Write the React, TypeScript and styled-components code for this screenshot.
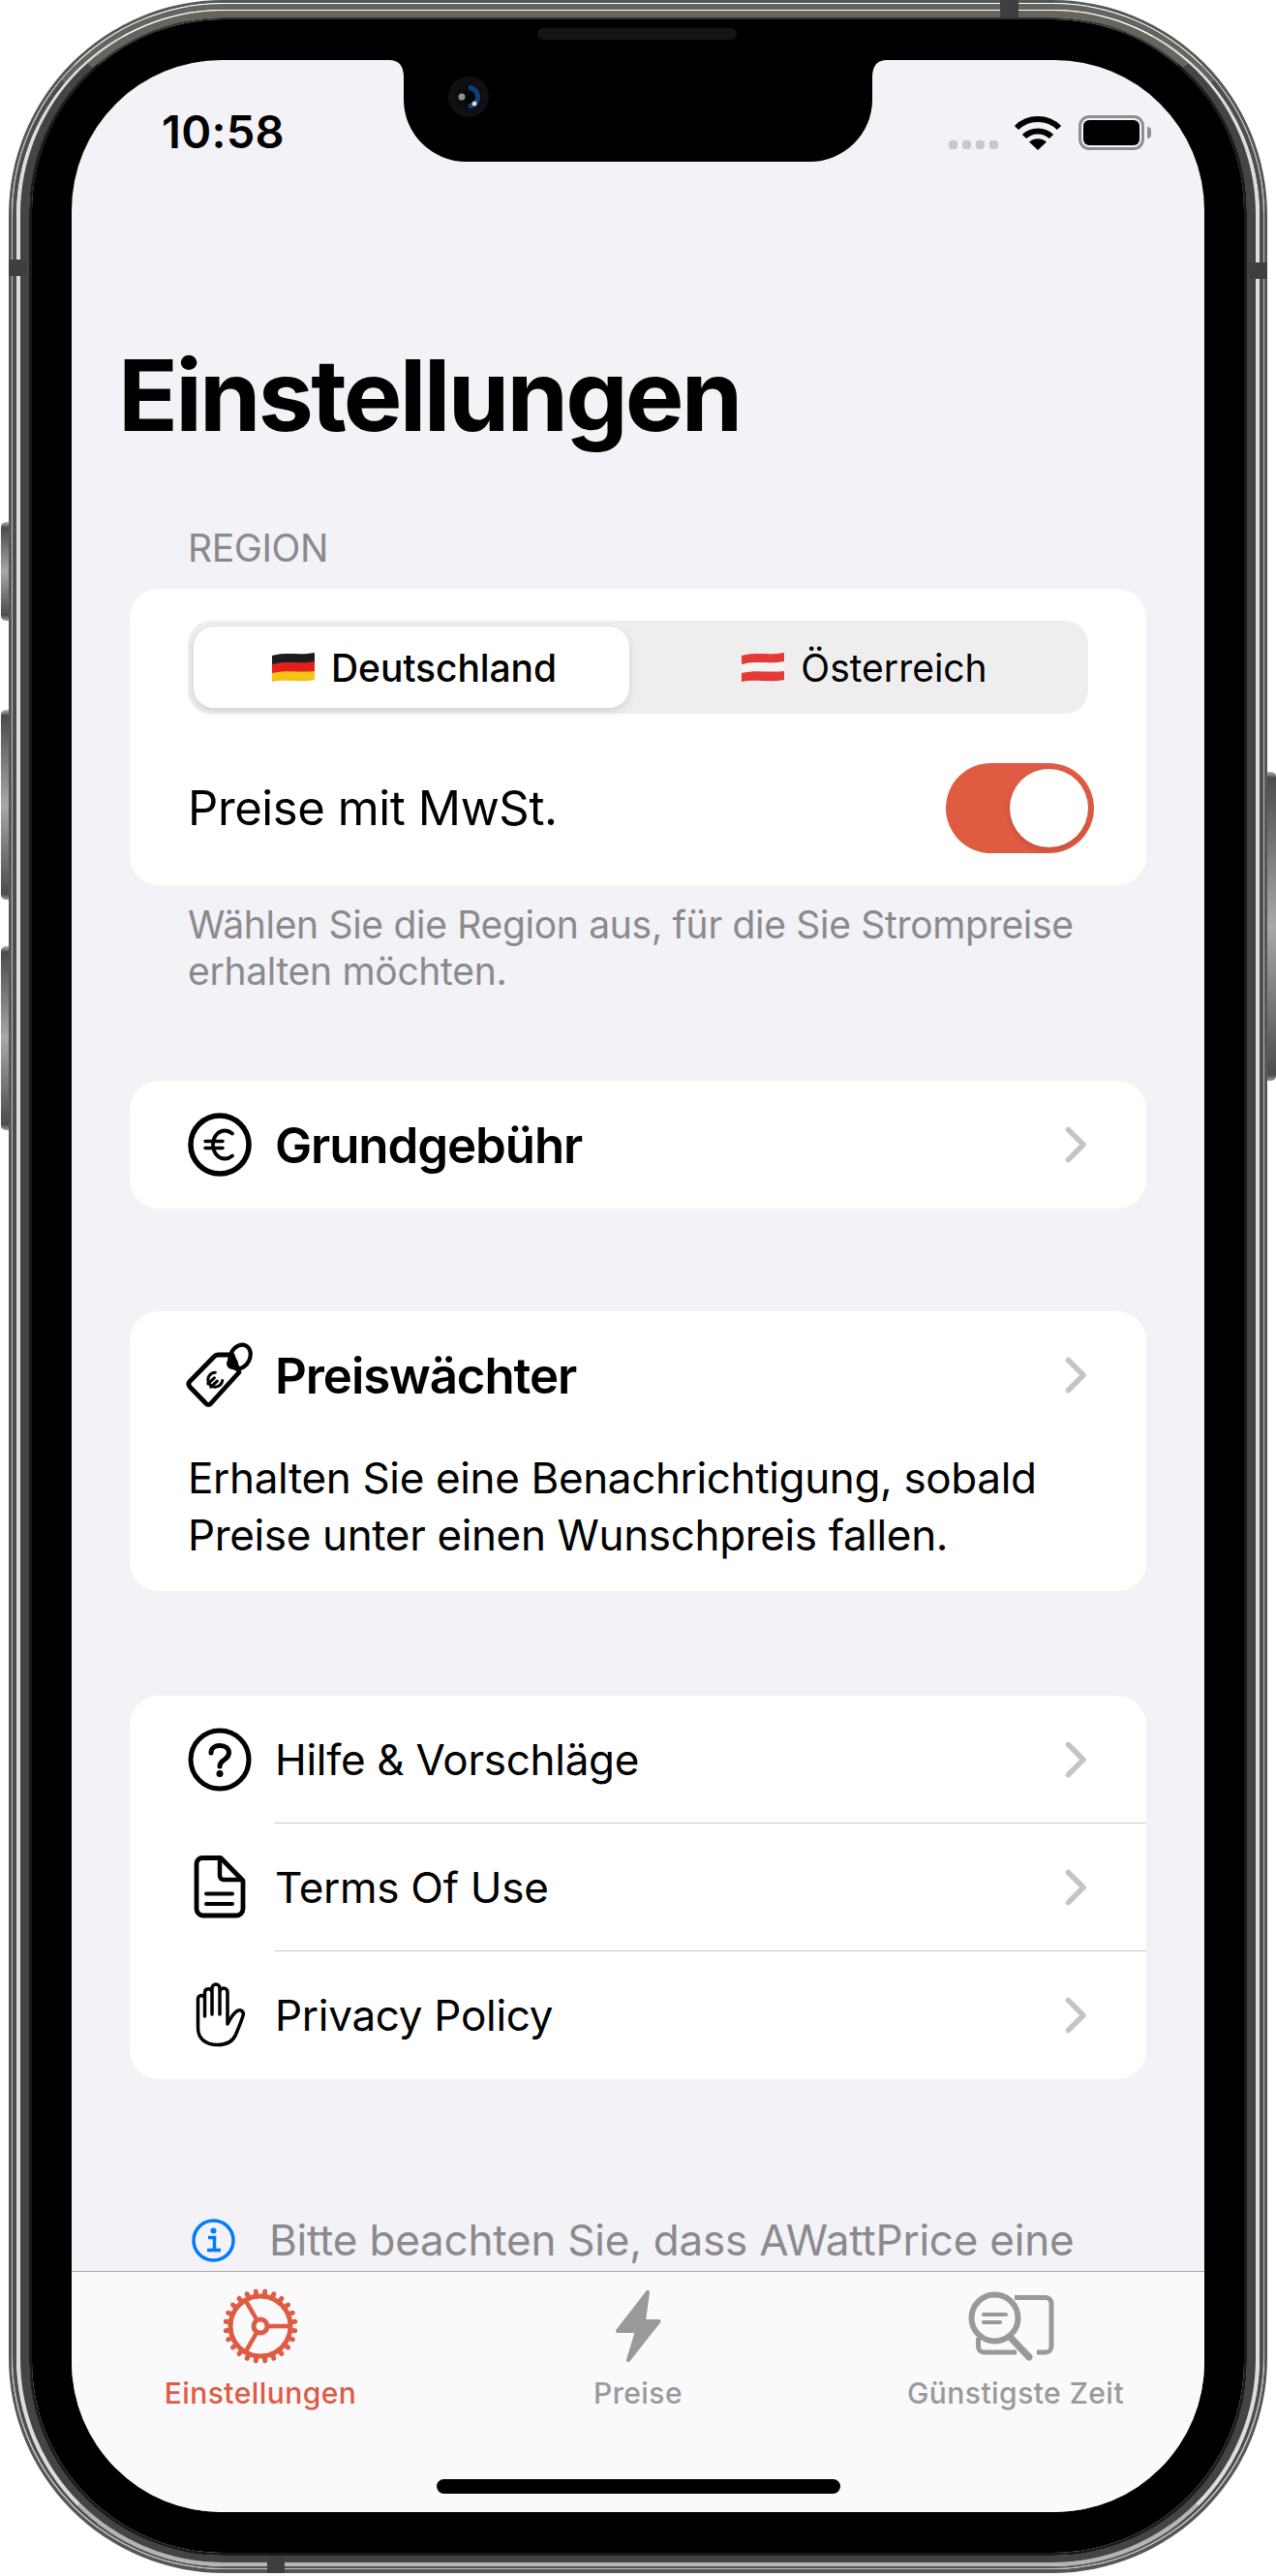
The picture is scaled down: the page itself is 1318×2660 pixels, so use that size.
import React from "react";
import styled, { createGlobalStyle } from "styled-components";

const RED = "#df5b42";
const TAB_GRAY = "#999999";
const LABEL_GRAY = "#8a8a8e";

const GlobalStyle = createGlobalStyle`
  html, body {
    margin: 0;
    padding: 0;
    background: #fff;
  }
  * {
    box-sizing: border-box;
  }
  body {
    font-family: Inter, "Liberation Sans", sans-serif;
    color: #000;
  }
`;

const Page = styled.div`
  width: 1318px;
  height: 2660px;
  padding-left: 9px;
  overflow: hidden;
`;

const Device = styled.div`
  position: relative;
  width: 1300px;
  height: 2657px;
`;

// One band of the steel frame, each side has its own width
const Ring = styled.div<{
  $r: number;
  $s: number;
  $t: number;
  $b: number;
  $c: string;
  $ct?: string;
  $cb?: string;
}>`
  display: flex;
  flex: 1;
  height: 100%;
  border-style: solid;
  border-width: ${($) => $.$t}px ${($) => $.$s}px ${($) => $.$b}px;
  border-color: ${($) => $.$ct ?? $.$c} ${($) => $.$c} ${($) => $.$cb ?? $.$c};
  border-radius: ${($) => $.$r}px;
`;

const Bezel = styled.div`
  position: relative;
  display: flex;
  flex: 1;
  padding: 42px 41px;
  background: #000;
  border-radius: 198px;
`;

const SideButton = styled.div<{ $top: number; $height: number; $right?: boolean }>`
  position: absolute;
  top: ${($) => $.$top}px;
  ${($) => ($.$right ? "right: -9px;" : "left: -8px;")}
  width: ${($) => ($.$right ? 9 : 8)}px;
  height: ${($) => $.$height}px;
  border-radius: ${($) => ($.$right ? "0 5px 5px 0" : "5px 0 0 5px")};
  background: linear-gradient(180deg, #b5b5b5 0, #4c4c4c 6px, #a8a8a8 50%, #4c4c4c calc(100% - 6px), #9a9a9a 100%);
`;

const Antenna = styled.div<{ $x: number; $y: number; $w: number; $h: number }>`
  position: absolute;
  left: ${($) => $.$x}px;
  top: ${($) => $.$y}px;
  width: ${($) => $.$w}px;
  height: ${($) => $.$h}px;
  background: #3f3f3f;
`;

const Speaker = styled.div`
  position: absolute;
  top: 9px;
  left: 522px;
  width: 206px;
  height: 12px;
  border-radius: 6px;
  background: #141414;
`;

const Screen = styled.div`
  position: relative;
  flex: 1;
  overflow: hidden;
  background: #f2f2f7;
  border-radius: 155px;
`;

const NotchShape = styled.svg`
  position: absolute;
  top: 0;
  left: 320px;
`;

const StatusBar = styled.div`
  display: flex;
  justify-content: space-between;
  align-items: flex-end;
  height: 93px;
  padding: 0 55px 0 93px;
`;

const Time = styled.div`
  font-size: 47px;
  line-height: 46px;
  font-weight: 600;
  letter-spacing: 0.3px;
  margin-bottom: -4px;
`;

const StatusIcons = styled.div`
  display: flex;
  align-items: flex-end;
`;

const SignalDots = styled.div`
  display: flex;
  gap: 5px;
  margin-right: 16px;
  margin-bottom: 1px;
`;

const SignalDot = styled.div`
  width: 9px;
  height: 9px;
  border-radius: 3px;
  background: #c7c7cc;
`;

const Battery = styled.div`
  display: flex;
  align-items: center;
  margin-left: 17px;
`;

const BatteryBody = styled.div`
  width: 68px;
  height: 36px;
  padding: 2px;
  border: 3px solid #8e8e93;
  border-radius: 11px;
`;

const BatteryFill = styled.div`
  height: 100%;
  border-radius: 6px;
  background: #000;
`;

const BatteryNub = styled.div`
  width: 4px;
  height: 12px;
  margin-left: 3px;
  border-radius: 0 4px 4px 0;
  background: #8e8e93;
`;

const Content = styled.div`
  display: flex;
  flex-direction: column;
  padding: 0 60px;
`;

const Title = styled.h1`
  margin: 192px 0 0 -12px;
  font-size: 102px;
  line-height: 122px;
  font-weight: 700;
  letter-spacing: -2.75px;
`;

const SectionLabel = styled.div`
  margin: 73px 0 18px 60px;
  font-size: 39px;
  line-height: 48px;
  color: ${LABEL_GRAY};
  letter-spacing: -0.4px;
`;

const Card = styled.div<{ $top?: number }>`
  margin-top: ${($) => $.$top ?? 0}px;
  overflow: hidden;
  background: #fff;
  border-radius: 30px;
`;

const RegionCard = styled(Card)`
  padding-top: 33px;
`;

const Segmented = styled.div`
  display: flex;
  height: 96px;
  margin: 0 60px;
  padding: 6px;
  border-radius: 24px;
  background: #eeeeef;
`;

const Segment = styled.div<{ $active?: boolean }>`
  display: flex;
  flex: ${($) => ($.$active ? "0 0 450px" : "1")};
  align-items: center;
  justify-content: center;
  gap: 17px;
  padding-left: ${($) => ($.$active ? 6 : 18)}px;
  font-size: 39px;
  font-weight: ${($) => ($.$active ? 500 : 400)};
  letter-spacing: ${($) => ($.$active ? -0.1 : 0)}px;
  border-radius: 21px;
  background: ${($) => ($.$active ? "#fff" : "transparent")};
  box-shadow: ${($) => ($.$active ? "0 3px 9px rgba(0, 0, 0, 0.13)" : "none")};
`;

const ToggleRow = styled.div`
  display: flex;
  align-items: center;
  justify-content: space-between;
  height: 159px;
  margin-top: 18px;
  padding: 0 54px 0 60px;
`;

const BodyText = styled.span`
  font-size: 49px;
  line-height: 59px;
  letter-spacing: -0.4px;
`;

const Toggle = styled.div`
  display: flex;
  justify-content: flex-end;
  width: 153px;
  height: 93px;
  padding: 6px;
  border-radius: 47px;
  background: ${RED};
`;

const ToggleThumb = styled.div`
  width: 81px;
  height: 81px;
  border-radius: 50%;
  background: #fff;
  box-shadow: 0 3px 6px rgba(0, 0, 0, 0.12);
`;

const FootNote = styled.div`
  margin: 17px 0 0 60px;
  font-size: 39px;
  line-height: 48px;
  color: ${LABEL_GRAY};
  letter-spacing: -0.3px;
`;

const Row = styled.div`
  display: flex;
  align-items: stretch;
  height: 132px;
  padding-left: 60px;
`;

const RowIcon = styled.svg`
  flex: none;
  align-self: center;
  width: 66px;
  height: 66px;
  margin-right: 24px;
  overflow: visible;
`;

const RowBody = styled.div<{ $line?: boolean }>`
  display: flex;
  flex: 1;
  align-items: center;
  justify-content: space-between;
  padding: 0 60px 0 0;
  border-bottom: ${($) => ($.$line ? "1px solid #c8c8ca" : "none")};
`;

const RowTitle = styled.span`
  font-size: 44px;
  letter-spacing: -0.28px;
`;

const StrongTitle = styled.span`
  font-size: 51px;
  font-weight: 600;
  letter-spacing: -1.1px;
`;

const Description = styled.p`
  margin: 11px 0 28px;
  padding: 0 60px;
  font-size: 44px;
  line-height: 59px;
  letter-spacing: -0.36px;
`;

const InfoRow = styled.div`
  display: flex;
  align-items: center;
  gap: 35px;
  height: 60px;
  margin: 136px 0 0 64px;
`;

const InfoText = styled.span`
  font-size: 44px;
  color: ${LABEL_GRAY};
  letter-spacing: -0.22px;
  white-space: nowrap;
`;

const TabBar = styled.div`
  position: absolute;
  left: 0;
  right: 0;
  bottom: 0;
  height: 249px;
  border-top: 1px solid #a9a9ab;
  background: #fafafc;
`;

const TabGrid = styled.div`
  display: grid;
  grid-template-columns: repeat(3, 1fr);
`;

const TabItem = styled.div<{ $active?: boolean }>`
  display: flex;
  flex-direction: column;
  align-items: center;
  color: ${($) => ($.$active ? RED : TAB_GRAY)};
`;

const TabIconBox = styled.div`
  display: flex;
  align-items: center;
  justify-content: center;
  height: 76px;
  margin-top: 18px;
`;

const SearchDocSvg = styled.svg`
  margin-right: 8px;
`;

const TabLabel = styled.span`
  margin-top: 13px;
  font-size: 30px;
  line-height: 36px;
  font-weight: 500;
  letter-spacing: 0.45px;
`;

const HomeIndicator = styled.div`
  width: 417px;
  height: 15px;
  margin: 71px auto 0;
  border-radius: 8px;
  background: #000;
`;

function Notch() {
  return (
    <NotchShape width="530" height="105" viewBox="0 0 530 105">
      <path
        d="M8 0Q23 0 23 18V41A65 64 0 0 0 88 105H442A65 64 0 0 0 507 41V18Q507 0 522 0Z"
        fill="#000"
      />
      <circle cx="90" cy="38" r="21" fill="#101012" />
      <circle cx="90" cy="38" r="13" fill="#0a0d12" />
      <path d="M90 26a12 12 0 0 1 0 24Z" fill="#0f4f96" opacity="0.8" />
      <circle cx="90" cy="38" r="7" fill="#050505" />
      <circle cx="83" cy="38" r="3.5" fill="#7f9a90" />
      <circle cx="96" cy="45" r="2.5" fill="#d8d8d8" />
    </NotchShape>
  );
}

function Wifi() {
  return (
    <svg width="50" height="36" viewBox="0 0 50 36">
      <path d="M3 13C15 1 35 1 47 13" fill="none" stroke="#000" strokeWidth="6" />
      <path d="M11 22C18 14.500 32 14.500 39 22" fill="none" stroke="#000" strokeWidth="6" />
      <path d="M25 36L16 27.500C21 23 29 23 34 27.500Z" fill="#000" />
    </svg>
  );
}

function FlagGermany() {
  return (
    <svg width="44" height="30" viewBox="0 0 44 30">
      <path d="M0 3C15 -1 29 3 44 0V10C29 13 15 9 0 13Z" fill="#1c1c1c" />
      <path d="M0 12C15 8 29 12 44 9V20C29 23 15 19 0 22Z" fill="#e3201b" />
      <path d="M0 21C15 17 29 21 44 19V28C29 31 15 27 0 30Z" fill="#f3c318" />
    </svg>
  );
}

function FlagAustria() {
  return (
    <svg width="44" height="30" viewBox="0 0 44 30">
      <path d="M0 3C15 -1 29 3 44 0V10C29 13 15 9 0 13Z" fill="#e23b37" />
      <path d="M0 12C15 8 29 12 44 9V20C29 23 15 19 0 22Z" fill="#f5f3f2" />
      <path d="M0 21C15 17 29 21 44 19V28C29 31 15 27 0 30Z" fill="#e23b37" />
    </svg>
  );
}

function Chevron() {
  return (
    <svg width="24" height="38" viewBox="0 0 24 38">
      <path
        d="M3.500 3.500L19 19L3.500 34.500"
        fill="none"
        stroke="#c4c4c7"
        strokeWidth="5.500"
        strokeLinecap="round"
        strokeLinejoin="round"
      />
    </svg>
  );
}

function EuroIcon() {
  return (
    <RowIcon viewBox="0 0 66 66" fill="none" stroke="#000">
      <circle cx="33" cy="33" r="30" strokeWidth="5.500" />
      <path
        d="M46 21.500C43.500 19.500 41 18.500 38.500 18.500C31 18.500 26 25 26 33C26 41 31 47.500 38.500 47.500C41 47.500 43.500 46.500 46 44.500"
        strokeWidth="3.800"
        strokeLinecap="round"
      />
      <path d="M18 29.500H36M18 36.500H36" strokeWidth="3.500" strokeLinecap="round" />
    </RowIcon>
  );
}

function TagIcon() {
  return (
    <RowIcon viewBox="14 17 66 66" fill="none" stroke="#000" strokeLinecap="round" strokeLinejoin="round">
      <path d="M45 29H60L67 47L38 79C36.500 81 34 81 32.500 79L16 62C14.500 60 14.500 58 16 56.500L41 31C42 30 43.500 29 45 29Z" strokeWidth="4.800" />
      <ellipse cx="68" cy="31" rx="10" ry="13" transform="rotate(28 68 31)" strokeWidth="4.200" />
      <circle cx="60" cy="38" r="5" fill="#000" strokeWidth="2" />
      <g transform="rotate(-42 42 55)" strokeWidth="3">
        <path d="M47.500 49.500A7.500 7.500 0 1 0 47.500 60.500" />
        <path d="M34 53H43M34 57.500H43" />
      </g>
    </RowIcon>
  );
}

function HelpIcon() {
  return (
    <RowIcon viewBox="0 0 66 66" fill="none" stroke="#000">
      <circle cx="33" cy="33" r="30" strokeWidth="5" />
      <path
        d="M24 26C24 21 28 18.500 33 18.500C38.500 18.500 42.500 21.500 42.500 26C42.500 30.500 39 32 36.500 34C34 36 33 37.500 33 40"
        strokeWidth="5"
        strokeLinecap="round"
      />
      <circle cx="33" cy="47.500" r="3.500" fill="#000" stroke="none" />
    </RowIcon>
  );
}

function DocIcon() {
  return (
    <RowIcon viewBox="0 0 66 66" fill="none" stroke="#000" strokeLinejoin="round">
      <path d="M15 2.500H34L57 26V55A7 7 0 0 1 50 62H16A7 7 0 0 1 9 55V8.500A6 6 0 0 1 15 2.500Z" strokeWidth="4.800" />
      <path d="M33 3V21A4 4 0 0 0 37 25H56" strokeWidth="4.500" />
      <path d="M19 39.500H46M19 50H46" strokeWidth="4" strokeLinecap="round" />
    </RowIcon>
  );
}

function HandIcon() {
  return (
    <RowIcon viewBox="0 0 66 66" fill="none" stroke="#000" strokeLinecap="round" strokeLinejoin="round">
      <path
        d="M10.500 46V16A3.500 3.500 0 0 1 17.500 16V34V9A3.800 3.800 0 0 1 25 9V32V5A3.800 3.800 0 0 1 33 5V32V9A3.800 3.800 0 0 1 41 9V42C43 38 47 31 51 28.500C54.500 26.500 58.500 29 57 33.500C55 40 52 47 49.500 53C46.500 60 40 63.500 31 63.500C18 63.500 10.500 57 10.500 46Z"
        strokeWidth="3.500"
      />
    </RowIcon>
  );
}

function InfoIcon() {
  return (
    <svg width="45" height="45" viewBox="0 0 45 45" fill="none" stroke="#007aff">
      <circle cx="22.500" cy="22.500" r="20.500" strokeWidth="3.500" />
      <circle cx="22.500" cy="12.500" r="3" fill="#007aff" stroke="none" />
      <path d="M17 19.500H23.500V32M16 32.500H30" strokeWidth="3.500" />
    </svg>
  );
}

function GearIcon() {
  const teeth = Array.from({ length: 24 }, (_, i) => (i * 360) / 24 + 7.5);
  return (
    <svg width="80" height="80" viewBox="-40 -40 80 80" fill="none" stroke={RED}>
      <circle r="31" strokeWidth="5" />
      {teeth.map((a) => (
        <line key={a} x1="31" x2="36" transform={`rotate(${a})`} strokeWidth="5" strokeLinecap="round" />
      ))}
      <circle r="7" strokeWidth="5" />
      <path d="M9 0H30M-4.500 7.800L-15.500 26.800M-4.500 -7.800L-15.500 -26.800" strokeWidth="4.500" />
    </svg>
  );
}

function BoltIcon() {
  return (
    <svg width="48" height="76" viewBox="0 0 48 76">
      <path
        d="M34 3L3 43H23L14 73L45.500 33H30Z"
        fill={TAB_GRAY}
        stroke={TAB_GRAY}
        strokeWidth="4"
        strokeLinejoin="round"
      />
    </svg>
  );
}

function SearchDocIcon() {
  return (
    <SearchDocSvg width="90" height="72" viewBox="0 0 90 72" fill="none" stroke={TAB_GRAY}>
      <path d="M48 6.500H80A6 6 0 0 1 86 12.500V57A6 6 0 0 1 80 63H71" strokeWidth="5" />
      <path d="M10.500 48V57A6 6 0 0 0 16.500 63H50" strokeWidth="5" />
      <circle cx="27.500" cy="27.500" r="24" strokeWidth="6" fill="#fafafc" />
      <path d="M45 49L63 68" strokeWidth="7" strokeLinecap="round" />
      <path d="M16 24H39M16 32H33" strokeWidth="4" strokeLinecap="round" />
    </SearchDocSvg>
  );
}

export default function App() {
  return (
    <Page>
      <GlobalStyle />
      <Device>
        <SideButton $top={539} $height={102} />
        <SideButton $top={733} $height={196} />
        <SideButton $top={977} $height={190} />
        <SideButton $right $top={797} $height={319} />
        <Ring $r={222} $s={3} $t={3} $b={4} $c="#565656">
          <Ring $r={219} $s={1} $t={1} $b={1} $c="#bdbdbd" $ct="#fff">
            <Ring $r={218} $s={4} $t={6} $b={2} $c="#4d4d4d" $ct="#66645f" $cb="#555">
              <Ring $r={214} $s={4} $t={1} $b={4} $c="#dddddd" $ct="#fff" $cb="#b5b5b5">
                <Ring $r={210} $s={9} $t={7} $b={7} $c="#444444" $ct="#67645e">
                  <Ring $r={201} $s={3} $t={2} $b={3} $c="#1a1a1a" $ct="#333">
                    <Bezel>
                      <Speaker />
                      <Screen>
                        <Notch />
                        <StatusBar>
                          <Time>10:58</Time>
                          <StatusIcons>
                            <SignalDots>
                              <SignalDot />
                              <SignalDot />
                              <SignalDot />
                              <SignalDot />
                            </SignalDots>
                            <Wifi />
                            <Battery>
                              <BatteryBody>
                                <BatteryFill />
                              </BatteryBody>
                              <BatteryNub />
                            </Battery>
                          </StatusIcons>
                        </StatusBar>
                        <Content>
                          <Title>Einstellungen</Title>
                          <SectionLabel>REGION</SectionLabel>
                          <RegionCard>
                            <Segmented>
                              <Segment $active>
                                <FlagGermany />
                                Deutschland
                              </Segment>
                              <Segment>
                                <FlagAustria />
                                Österreich
                              </Segment>
                            </Segmented>
                            <ToggleRow>
                              <BodyText>Preise mit MwSt.</BodyText>
                              <Toggle>
                                <ToggleThumb />
                              </Toggle>
                            </ToggleRow>
                          </RegionCard>
                          <FootNote>
                            Wählen Sie die Region aus, für die Sie Strompreise
                            <br />
                            erhalten möchten.
                          </FootNote>
                          <Card $top={89}>
                            <Row>
                              <EuroIcon />
                              <RowBody>
                                <StrongTitle>Grundgebühr</StrongTitle>
                                <Chevron />
                              </RowBody>
                            </Row>
                          </Card>
                          <Card $top={106}>
                            <Row>
                              <TagIcon />
                              <RowBody>
                                <StrongTitle>Preiswächter</StrongTitle>
                                <Chevron />
                              </RowBody>
                            </Row>
                            <Description>
                              Erhalten Sie eine Benachrichtigung, sobald
                              <br />
                              Preise unter einen Wunschpreis fallen.
                            </Description>
                          </Card>
                          <Card $top={108}>
                            <Row>
                              <HelpIcon />
                              <RowBody $line>
                                <RowTitle>Hilfe &amp; Vorschläge</RowTitle>
                                <Chevron />
                              </RowBody>
                            </Row>
                            <Row>
                              <DocIcon />
                              <RowBody $line>
                                <RowTitle>Terms Of Use</RowTitle>
                                <Chevron />
                              </RowBody>
                            </Row>
                            <Row>
                              <HandIcon />
                              <RowBody>
                                <RowTitle>Privacy Policy</RowTitle>
                                <Chevron />
                              </RowBody>
                            </Row>
                          </Card>
                          <InfoRow>
                            <InfoIcon />
                            <InfoText>Bitte beachten Sie, dass AWattPrice eine</InfoText>
                          </InfoRow>
                        </Content>
                        <TabBar>
                          <TabGrid>
                            <TabItem $active>
                              <TabIconBox>
                                <GearIcon />
                              </TabIconBox>
                              <TabLabel>Einstellungen</TabLabel>
                            </TabItem>
                            <TabItem>
                              <TabIconBox>
                                <BoltIcon />
                              </TabIconBox>
                              <TabLabel>Preise</TabLabel>
                            </TabItem>
                            <TabItem>
                              <TabIconBox>
                                <SearchDocIcon />
                              </TabIconBox>
                              <TabLabel>Günstigste Zeit</TabLabel>
                            </TabItem>
                          </TabGrid>
                          <HomeIndicator />
                        </TabBar>
                      </Screen>
                    </Bezel>
                  </Ring>
                </Ring>
              </Ring>
            </Ring>
          </Ring>
        </Ring>
        <Antenna $x={0} $y={268} $w={19} $h={17} />
        <Antenna $x={1281} $y={271} $w={19} $h={17} />
        <Antenna $x={1024} $y={0} $w={19} $h={18} />
        <Antenna $x={267} $y={2639} $w={18} $h={18} />
      </Device>
    </Page>
  );
}
